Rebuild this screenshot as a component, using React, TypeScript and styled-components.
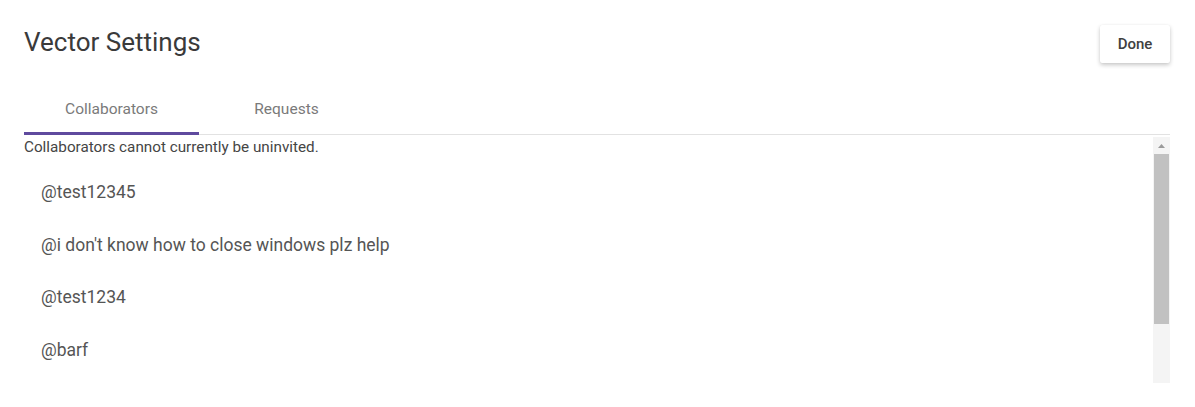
import React from "react";
import styled, { createGlobalStyle } from "styled-components";

const collaborators: string[] = [
  "@test12345",
  "@i don't know how to close windows plz help",
  "@test1234",
  "@barf",
];

const tabs = ["Collaborators", "Requests"];

export default function App() {
  const activeTab = 0;

  return (
    <>
      <GlobalStyle />
      <Dialog>
        <Header>
          <Title>Vector Settings</Title>
          <DoneButton>Done</DoneButton>
        </Header>
        <TabBar>
          {tabs.map((tab, index) => (
            <Tab key={tab} isActive={index === activeTab}>
              {tab}
            </Tab>
          ))}
        </TabBar>
        <Panel>
          <Content>
            <Note>Collaborators cannot currently be uninvited.</Note>
            <List>
              {collaborators.map((name) => (
                <Item key={name}>{name}</Item>
              ))}
            </List>
          </Content>
          <ScrollBar>
            <ScrollButton>
              <svg width="7" height="4" viewBox="0 0 7 4">
                <path d="M0 4 L3.5 0 L7 4 Z" fill="#9a9a9a" />
              </svg>
            </ScrollButton>
            <Thumb style={{ height: 170 }} />
          </ScrollBar>
        </Panel>
      </Dialog>
    </>
  );
}

const GlobalStyle = createGlobalStyle`
  html, body {
    margin: 0;
    padding: 0;
    background: #ffffff;
    font-family: Roboto, "Liberation Sans", sans-serif;
  }
`;

const Dialog = styled.div`
  width: 1195px;
  height: 407px;
  box-sizing: border-box;
  padding: 25px 25px 0 24px;
  display: flex;
  flex-direction: column;
`;

const Header = styled.div`
  display: flex;
  justify-content: space-between;
  align-items: flex-start;
  height: 66px;
`;

const Title = styled.h1`
  margin: 2px 0 0;
  font-size: 26px;
  font-weight: 400;
  color: #3a3a3a;
  line-height: 30px;
`;

const DoneButton = styled.button`
  width: 70px;
  height: 38px;
  border: none;
  border-radius: 2px;
  background: #ffffff;
  box-shadow: 0 2px 4px rgba(0, 0, 0, 0.22), 0 0 1px rgba(0, 0, 0, 0.08);
  font-family: Roboto, "Liberation Sans", sans-serif;
  font-size: 15px;
  font-weight: 500;
  color: #404040;
  cursor: pointer;
`;

const TabBar = styled.div`
  display: flex;
  border-bottom: 1px solid #e2e2e2;
`;

const Tab = styled.div<{ isActive: boolean }>`
  width: 175px;
  height: 44px;
  box-sizing: border-box;
  padding-bottom: 6px;
  display: flex;
  align-items: center;
  justify-content: center;
  font-size: 15.5px;
  color: #7a7a7a;
  border-bottom: 3px solid
    ${({ isActive }) => (isActive ? "#5f4a9e" : "transparent")};
  margin-bottom: -1px;
`;

const Panel = styled.div`
  height: 246px;
  margin-top: 2px;
  display: flex;
`;

const Content = styled.div`
  flex: 1;
  overflow: hidden;
`;

const ScrollBar = styled.div`
  width: 17px;
  background: #f4f4f4;
  display: flex;
  flex-direction: column;
`;

const ScrollButton = styled.div`
  height: 17px;
  display: flex;
  align-items: center;
  justify-content: center;
`;

const Thumb = styled.div`
  margin: 0 1px;
  background: #c1c1c1;
`;

const Note = styled.div`
  font-size: 15.25px;
  color: #454545;
  line-height: 20px;
  margin-top: 0;
`;

const List = styled.div`
  display: flex;
  flex-direction: column;
  padding: 9px 0 0 17px;
`;

const Item = styled.div`
  height: 52.5px;
  display: flex;
  align-items: center;
  font-size: 17.5px;
  color: #555555;
`;
